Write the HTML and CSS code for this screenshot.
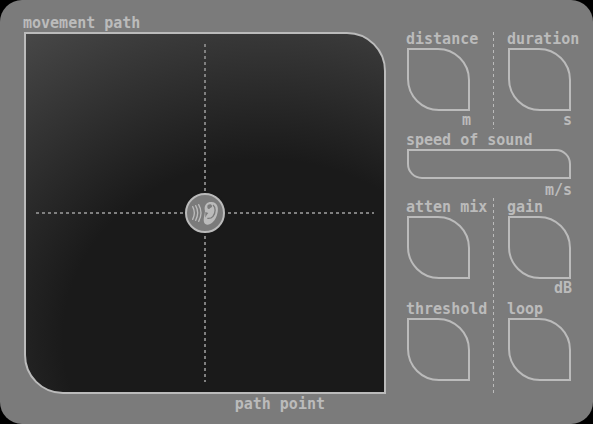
FILE: index.html
```html
<!DOCTYPE html>
<html lang="en">
<head>
<meta charset="utf-8">
<title>movement path</title>
<link rel="stylesheet" href="styles.css">
</head>
<body>
<main class="panel">
  <section class="path">
    <h1 class="label">movement path</h1>
    <div class="pad">
      <svg class="axes" viewBox="0 0 358 358" aria-hidden="true">
        <path d="M179 10V348M10 179H348"/>
      </svg>
      <button class="listener" type="button" aria-label="listener">
        <svg class="ear" viewBox="0 0 120 120" aria-hidden="true">
          <g class="waves">
            <path d="M23 41Q33 59 23 79"/>
            <path d="M32 38Q44 59 32 82"/>
            <path d="M41 35Q55 59 41 85"/>
          </g>
          <path class="ear-shape" d="M59 49C58 34 67 26 80 27C96 28 101 42 98 57C96 69 91 80 83 88C74 97 60 98 57 88C55 80 57 73 58 67C59 61 61 56 59 49Z"/>
          <path class="fold" d="M84 36C93 43 92 60 84 70C80 75 74 77 67 76"/>
          <path class="hollow" d="M67 40C68 33 78 32 81 38C82 44 76 43 74 47C70 50 66 46 67 40ZM61 57L70 60L65 66L61 74Z"/>
        </svg>
      </button>
    </div>
    <p class="label point">path point</p>
  </section>

  <form class="controls">
    <div class="pair">
      <div class="field">
        <label class="label" for="distance">distance</label>
        <input class="dial" id="distance" type="text">
        <span class="unit">m</span>
      </div>
      <div class="divider"></div>
      <div class="field">
        <label class="label" for="duration">duration</label>
        <input class="dial" id="duration" type="text">
        <span class="unit">s</span>
      </div>
    </div>

    <div class="field speed">
      <label class="label" for="speed">speed of sound</label>
      <input class="bar" id="speed" type="text">
      <span class="unit">m/s</span>
    </div>

    <div class="pair lower">
      <div class="field">
        <label class="label" for="mix">atten mix</label>
        <input class="dial" id="mix" type="text">
      </div>
      <div class="divider"></div>
      <div class="field">
        <label class="label" for="gain">gain</label>
        <input class="dial" id="gain" type="text">
        <span class="unit">dB</span>
      </div>
      <div class="field">
        <label class="label" for="threshold">threshold</label>
        <input class="dial" id="threshold" type="text">
      </div>
      <div class="field">
        <label class="label" for="loop">loop</label>
        <input class="dial" id="loop" type="text">
      </div>
    </div>
  </form>
</main>
</body>
</html>
```
FILE: styles.css
```css
* {
  box-sizing: border-box;
}

body {
  margin: 0;
  background: #000;
  color: #bbb;
  font: bold 15px/18px "DejaVu Sans Mono", monospace;
}

.panel {
  display: flex;
  gap: 21px;
  min-height: 100vh;
  padding: 16px 22px 0 24px;
  border-radius: 22px;
  background: #7b7b7b;
}

.path {
  flex: 1;
  min-width: 0;
}

.label {
  display: block;
  height: 16px;
  margin: 0 0 0 -1px;
  font-size: 15px;
  font-weight: bold;
  line-height: 14px;
  white-space: nowrap;
}

.pad {
  position: relative;
  aspect-ratio: 1;
  border: 2px solid #bbb;
  border-radius: 0 39px;
  background: radial-gradient(118% 104% at 67% 85%, #1a1a1a 48%, #484848 100%);
}

.axes {
  display: block;
  width: 100%;
  height: 100%;
  fill: none;
  stroke: #808080;
  stroke-width: 2;
  stroke-dasharray: 3 3;
}

.listener {
  position: absolute;
  inset: 0;
  width: 40px;
  height: 40px;
  margin: auto;
  padding: 0;
  border: 2px solid #bbb;
  border-radius: 50%;
  background: #7b7b7b;
  box-shadow: 0 0 0 2px #1a1a1a;
}

.ear {
  display: block;
  width: 40px;
  height: 40px;
  margin: -2px;
}

.waves {
  fill: none;
  stroke: #bbb;
  stroke-width: 4;
  stroke-linecap: round;
}

.ear-shape {
  fill: #bbb;
}

.fold {
  fill: none;
  stroke: #7b7b7b;
  stroke-width: 4;
}

.hollow {
  fill: #7b7b7b;
}

.point {
  margin: 3px 61px 0 0;
  text-align: right;
}

.controls {
  width: 164px;
  padding-top: 16px;
}

.pair {
  display: grid;
  grid-template-columns: 63px 1px 63px;
  column-gap: 18px;
  justify-content: space-between;
}

.lower {
  grid-template-rows: 102px 93px;
  margin-top: 1px;
}

.divider {
  margin-left: 4px;
  width: 1px;
  background: repeating-linear-gradient(#bbb 0 3px, transparent 3px 6px);
}

.lower .divider {
  grid-row: 1 / 3;
  grid-column: 2;
  margin-top: -2px;
}

.lower .field:nth-of-type(5) {
  grid-column: 3;
}

.field {
  display: flex;
  flex-direction: column;
}

.dial,
.bar {
  width: 100%;
  padding: 4px 8px;
  border: 2px solid #bbb;
  background: transparent;
  color: inherit;
  font: inherit;
  text-align: center;
}

.dial {
  height: 63px;
  border-radius: 0 32px;
}

.bar {
  height: 30px;
  border-radius: 0 15px;
}

.unit {
  align-self: flex-end;
  margin-right: -1px;
}

.speed {
  margin-top: 4px;
}

.speed .unit {
  margin-top: 2px;
}
```
